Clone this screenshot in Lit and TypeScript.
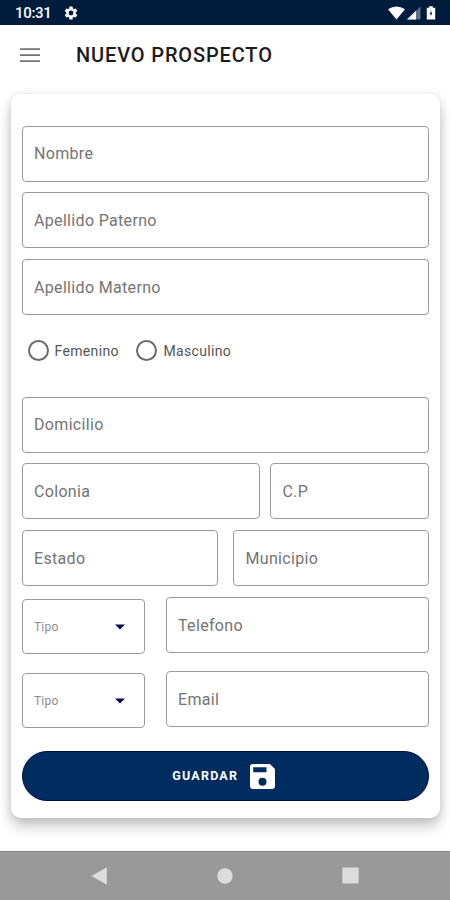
import { LitElement, html, css } from "lit";
import { customElement, property } from "lit/decorators.js";

@customElement("outlined-field")
export class OutlinedField extends LitElement {
  @property() label = "";

  static styles = css`
    :host {
      display: flex;
      align-items: center;
      box-sizing: border-box;
      height: 56px;
      padding: 1.8px 11.5px 0;
      border: 1px solid #9a9a9a;
      border-radius: 4px;
      background: #fff;
    }
    .label {
      color: #747474;
      font: 400 16px/20px Roboto, sans-serif;
      letter-spacing: 0.33px;
      white-space: nowrap;
    }
  `;

  render() {
    return html`<span class="label">${this.label}</span>`;
  }
}

@customElement("select-field")
export class SelectField extends LitElement {
  @property() label = "";

  static styles = css`
    :host {
      display: flex;
      align-items: center;
      justify-content: space-between;
      box-sizing: border-box;
      height: 55px;
      padding: 0.8px 18px 0 11.5px;
      border: 1px solid #9a9a9a;
      border-radius: 4px;
      background: #fff;
    }
    .label {
      color: #8c8c8c;
      font: 400 12px/16px Roboto, sans-serif;
      letter-spacing: 0.2px;
    }
    .arrow {
      display: block;
      width: 12px;
      height: 6px;
      fill: #0b0650;
    }
  `;

  render() {
    return html`<span class="label">${this.label}</span>
      <svg class="arrow" viewBox="0 0 12 6"><path d="M1 .5h10L6 5.5z" /></svg>`;
  }
}

@customElement("radio-option")
export class RadioOption extends LitElement {
  @property() label = "";

  static styles = css`
    :host {
      display: flex;
      align-items: center;
      gap: 6px;
    }
    .ring {
      box-sizing: border-box;
      width: 21px;
      height: 21px;
      border: 2px solid #6a6a6a;
      border-radius: 50%;
    }
    .label {
      padding-top: 1.4px;
      color: #555;
      font: 400 14px/18px Roboto, sans-serif;
      letter-spacing: 0.35px;
    }
  `;

  render() {
    return html`<span class="ring"></span><span class="label">${this.label}</span>`;
  }
}

@customElement("app-root")
export class AppRoot extends LitElement {
  static styles = css`
    :host {
      display: flex;
      flex-direction: column;
      width: 450px;
      height: 900px;
      overflow: hidden;
      background: #fff;
      font-family: Roboto, sans-serif;
    }
    svg {
      display: block;
    }
    .status {
      display: flex;
      align-items: center;
      flex: none;
      box-sizing: border-box;
      height: 25px;
      padding: 1px 13px 0 15px;
      background: #001c3d;
      color: #fff;
    }
    .time {
      width: 48px;
      font-size: 15px;
      font-weight: 500;
      line-height: 20px;
      letter-spacing: -0.3px;
    }
    .indicators {
      display: flex;
      align-items: center;
      margin-left: auto;
    }
    .bar {
      display: flex;
      align-items: center;
      flex: none;
      height: 60px;
      padding-left: 20px;
      gap: 36px;
    }
    .title {
      margin: 0;
      color: #1c1c1c;
      font-size: 20px;
      font-weight: 500;
      line-height: 24px;
      letter-spacing: 0.86px;
    }
    .card {
      flex: none;
      box-sizing: border-box;
      width: 429.5px;
      height: 724px;
      margin: 9px 0 0 10.5px;
      padding: 31.5px 11px 0;
      border-radius: 10px;
      background: #fff;
      box-shadow: 0 9px 14px rgba(0, 0, 0, 0.2), 0 1px 10px rgba(0, 0, 0, 0.12);
    }
    .stack {
      display: flex;
      flex-direction: column;
      gap: 10.7px;
    }
    .radios {
      display: flex;
      align-items: center;
      gap: 17.5px;
      height: 70.7px;
      padding: 0 0 11px 6px;
    }
    .row {
      display: grid;
      column-gap: 10px;
    }
    .place {
      grid-template-columns: 238.5px 1fr;
    }
    .region {
      grid-template-columns: 196.5px 1fr;
      column-gap: 15px;
    }
    .contact {
      grid-template-columns: 123.5px 1fr;
      column-gap: 20.5px;
      align-items: start;
    }
    .contact select-field {
      margin-top: 2.5px;
    }
    .second {
      margin-top: 6px;
    }
    .save {
      display: flex;
      align-items: center;
      justify-content: center;
      gap: 12px;
      box-sizing: border-box;
      width: 100%;
      height: 50px;
      margin-top: 22.7px;
      padding: 0 3px 0 0;
      border: 1px solid #00114c;
      border-radius: 25px;
      background: #002c5f;
      color: #fff;
      font: 700 12.5px/16px Roboto, sans-serif;
      letter-spacing: 1.2px;
    }
    .nav {
      display: flex;
      align-items: center;
      justify-content: space-between;
      flex: none;
      box-sizing: border-box;
      height: 49.5px;
      margin-top: auto;
      padding: 0 91px;
      border-top: 1px solid #8b8b8b;
      background: #999;
      fill: #dcdcdc;
    }
  `;

  render() {
    return html`
      <header class="status">
        <span class="time">10:31</span>
        <svg width="16" height="16" viewBox="0 0 24 24" fill="#fff">
          <path
            d="M19.14 12.94c.04-.3.06-.61.06-.94s-.02-.64-.07-.94l2.03-1.58a.49.49 0 0 0 .12-.61l-1.92-3.32a.49.49 0 0 0-.59-.22l-2.39.96a7 7 0 0 0-1.62-.94l-.36-2.54A.48.48 0 0 0 13.92 2.4h-3.84a.47.47 0 0 0-.47.41l-.36 2.54c-.59.24-1.13.57-1.62.94l-2.39-.96a.48.48 0 0 0-.59.22L2.74 8.87a.48.48 0 0 0 .12.61l2.03 1.58a6 6 0 0 0 0 1.88l-2.03 1.58a.49.49 0 0 0-.12.61l1.92 3.32c.12.22.37.29.59.22l2.39-.96c.5.38 1.03.7 1.62.94l.36 2.54c.05.24.24.41.48.41h3.84c.24 0 .44-.17.47-.41l.36-2.54c.59-.24 1.13-.56 1.62-.94l2.39.96c.22.08.47 0 .59-.22l1.92-3.32a.47.47 0 0 0-.12-.61zM12 15.6a3.6 3.6 0 1 1 0-7.2 3.6 3.6 0 0 1 0 7.2z"
          />
        </svg>
        <div class="indicators">
          <svg width="49" height="16" viewBox="0 0 49 16">
            <path d="M0 4.2Q8.500-1.200 17 4.200L8.500 14.500z" fill="#fff" />
            <path d="M32.500 1.500v13H19z" fill="#5c6f86" />
            <path d="M28 5.800v8.700h-9z" fill="#fff" />
            <path d="M41.200 1.200h3.600v1.600h2.400v11.700h-8.400V2.800h2.400z" fill="#fff" />
            <path d="M43.300 5.200v2.600h1L42.700 11.500V9h-1z" fill="#001c3d" />
          </svg>
        </div>
      </header>
      <div class="bar">
        <svg width="20" height="14" viewBox="0 0 20 14" fill="#747474">
          <path d="M0 .2h20v1.700H0zM0 6.200h20v1.700H0zM0 12.200h20v1.700H0z" />
        </svg>
        <h1 class="title">NUEVO PROSPECTO</h1>
      </div>
      <main class="card">
        <div class="stack">
          <outlined-field label="Nombre"></outlined-field>
          <outlined-field label="Apellido Paterno"></outlined-field>
          <outlined-field label="Apellido Materno"></outlined-field>
        </div>
        <div class="radios">
          <radio-option label="Femenino"></radio-option>
          <radio-option label="Masculino"></radio-option>
        </div>
        <div class="stack">
          <outlined-field label="Domicilio"></outlined-field>
          <div class="row place">
            <outlined-field label="Colonia"></outlined-field>
            <outlined-field label="C.P"></outlined-field>
          </div>
          <div class="row region">
            <outlined-field label="Estado"></outlined-field>
            <outlined-field label="Municipio"></outlined-field>
          </div>
          <div class="row contact">
            <select-field label="Tipo"></select-field>
            <outlined-field label="Telefono"></outlined-field>
          </div>
          <div class="row contact second">
            <select-field label="Tipo"></select-field>
            <outlined-field label="Email"></outlined-field>
          </div>
        </div>
        <button class="save">
          <span>GUARDAR</span>
          <svg width="25" height="25" viewBox="0 0 25 25">
            <path
              fill="#fff"
              fill-rule="evenodd"
              d="M3 0h17l5 5v17a3 3 0 0 1-3 3H3a3 3 0 0 1-3-3V3a3 3 0 0 1 3-3zM3.200 3.300v5h13.300v-5zM12.500 13.700a4 4 0 1 0 0 8 4 4 0 0 0 0-8z"
            />
          </svg>
        </button>
      </main>
      <nav class="nav">
        <svg width="16" height="18" viewBox="0 0 16 18"><path d="M0.500 9 15.800.2v17.600z" /></svg>
        <svg width="16" height="16" viewBox="0 0 16 16"><circle cx="8" cy="8" r="7.700" /></svg>
        <svg width="17" height="17" viewBox="0 0 17 17"><rect x=".3" y=".5" width="16.400" height="16" rx="1" /></svg>
      </nav>
    `;
  }
}
